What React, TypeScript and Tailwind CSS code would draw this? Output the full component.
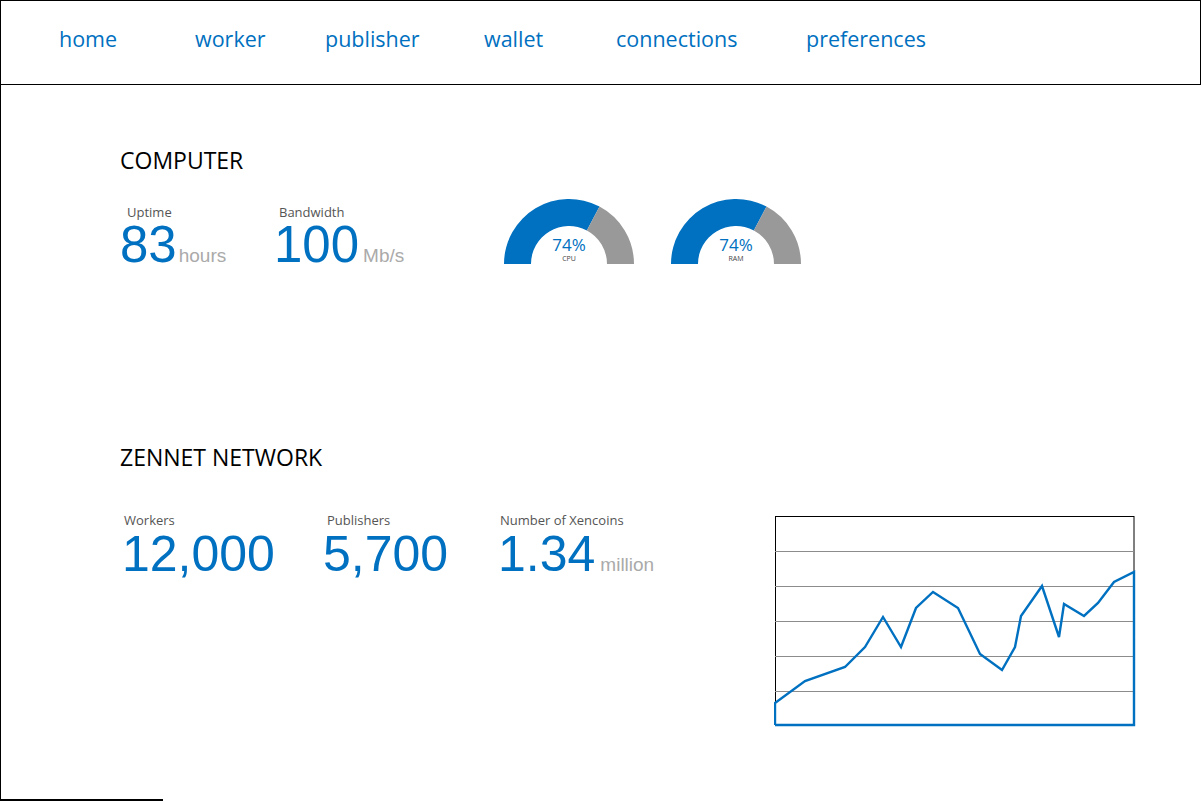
import React from "react";

const sans = { fontFamily: '"Open Sans", "Noto Sans", sans-serif' };

function Gauge({ label }: { label: string }) {
  const cx = 66;
  const cy = 66;
  const R = 65;
  const r = 38;
  const a = (62 * Math.PI) / 180;
  const ox = cx + R * Math.cos(a);
  const oy = cy - R * Math.sin(a);
  const ix = cx + r * Math.cos(a);
  const iy = cy - r * Math.sin(a);
  const blue = `M ${cx - R} ${cy} A ${R} ${R} 0 0 1 ${ox} ${oy} L ${ix} ${iy} A ${r} ${r} 0 0 0 ${cx - r} ${cy} Z`;
  const gray = `M ${ox} ${oy} A ${R} ${R} 0 0 1 ${cx + R} ${cy} L ${cx + r} ${cy} A ${r} ${r} 0 0 0 ${ix} ${iy} Z`;
  return (
    <div className="relative w-[132px] h-[67px]">
      <svg width="132" height="67" viewBox="0 0 132 67">
        <path d={blue} fill="#0070c0" />
        <path d={gray} fill="#999999" />
      </svg>
      <div className="absolute left-0 right-0 top-[38px] flex flex-col items-center">
        <span className="text-[17px] leading-[17px] text-[#0070c0]" style={sans}>74%</span>
        <span className="mt-[2px] text-[7px] leading-[8px] text-[#444]" style={sans}>{label}</span>
      </div>
    </div>
  );
}

const pts: [number, number][] = [
  [0, 187], [30, 165], [70, 151], [90, 131], [108, 101], [126, 131], [141, 92], [158, 76],
  [183, 92], [205, 138], [227, 154], [240, 131], [246, 100], [267, 70], [284, 121], [289, 88],
  [309, 100], [323, 87], [339, 66], [359, 56],
];

function Chart() {
  const line = pts.map((p) => p.join(",")).join(" ");
  return (
    <svg width="362" height="212" viewBox="-1 -1 362 212" className="block">
      <rect x="0.5" y="0.5" width="358.5" height="209" fill="none" stroke="#000" strokeWidth="1" />
      {[35, 70, 105, 140, 175].map((y) => (
        <line key={y} x1="0" x2="359" y1={y + 0.5} y2={y + 0.5} stroke="#8c8c8c" strokeWidth="1" />
      ))}
      <polyline
        points={`0,209 ${line} 359,209 0,209`}
        fill="none"
        stroke="#0070c0"
        strokeWidth="2.4"
        strokeLinejoin="miter"
      />
    </svg>
  );
}

export default function App() {
  const nav = [
    { t: "home", w: "w-[136px]" },
    { t: "worker", w: "w-[130px]" },
    { t: "publisher", w: "w-[159px]" },
    { t: "wallet", w: "w-[132px]" },
    { t: "connections", w: "w-[190px]" },
    { t: "preferences", w: "w-[150px]" },
  ];
  const num = { fontFamily: '"Liberation Sans", Arial, sans-serif' };
  return (
    <div className="w-[1201px] h-[801px] bg-white relative overflow-hidden">
      <header className="h-[85px] border border-black flex items-center pl-[58px]">
        {nav.map((n) => (
          <div key={n.t} className={`${n.w} text-[21.5px] leading-[22px] text-[#0070c0] pb-[8px]`} style={sans}>
            {n.t}
          </div>
        ))}
      </header>
      <main className="h-[716px] border-l border-black flex flex-col justify-between">
        <div className="pl-[119px] pt-[64px] flex flex-col">
          <h2 className="text-[23px] leading-[23px] text-black" style={sans}>COMPUTER</h2>
          <div className="flex items-start mt-[34px]">
            <div className="w-[154px] flex flex-col">
              <span className="ml-[7px] text-[13px] leading-[13px] text-[#555]" style={sans}>Uptime</span>
              <div className="flex items-baseline">
                <span className="text-[51px] leading-[52px] text-[#0070c0]" style={num}>83</span>
                <span className="ml-[2px] text-[19px] leading-[20px] text-[#aaaaaa]" style={num}>hours</span>
              </div>
            </div>
            <div className="w-[229px] flex flex-col">
              <span className="ml-[5px] text-[13px] leading-[13px] text-[#555]" style={sans}>Bandwidth</span>
              <div className="flex items-baseline">
                <span className="text-[51px] leading-[52px] text-[#0070c0]" style={num}>100</span>
                <span className="ml-[4px] text-[19px] leading-[20px] text-[#aaaaaa]" style={num}>Mb/s</span>
              </div>
            </div>
            <div className="w-[167px] -mt-[8px]">
              <Gauge label="CPU" />
            </div>
            <div className="-mt-[8px]">
              <Gauge label="RAM" />
            </div>
          </div>

          <h2 className="mt-[175px] text-[23px] leading-[23px] text-black" style={sans}>ZENNET NETWORK</h2>
          <div className="flex items-start mt-[45px]">
            <div className="w-[203px] flex flex-col pl-[2px]">
              <span className="ml-[2px] text-[13px] leading-[13px] text-[#555]" style={sans}>Workers</span>
              <span className="mt-[2px] text-[50px] leading-[50px] text-[#0070c0]" style={num}>12,000</span>
            </div>
            <div className="w-[175px] flex flex-col">
              <span className="ml-[4px] text-[13px] leading-[13px] text-[#555]" style={sans}>Publishers</span>
              <span className="mt-[2px] text-[50px] leading-[50px] text-[#0070c0]" style={num}>5,700</span>
            </div>
            <div className="w-[276px] flex flex-col">
              <span className="ml-[2px] text-[13px] leading-[13px] text-[#555]" style={sans}>Number of Xencoins</span>
              <div className="mt-[2px] flex items-baseline">
                <span className="text-[50px] leading-[50px] text-[#0070c0]" style={num}>1.34</span>
                <span className="ml-[5px] text-[19px] leading-[20px] text-[#aaaaaa]" style={num}>million</span>
              </div>
            </div>
            <div className="mt-[1px]">
              <Chart />
            </div>
          </div>
        </div>
        <div className="w-[162px] h-[2px] bg-black" />
      </main>
    </div>
  );
}
